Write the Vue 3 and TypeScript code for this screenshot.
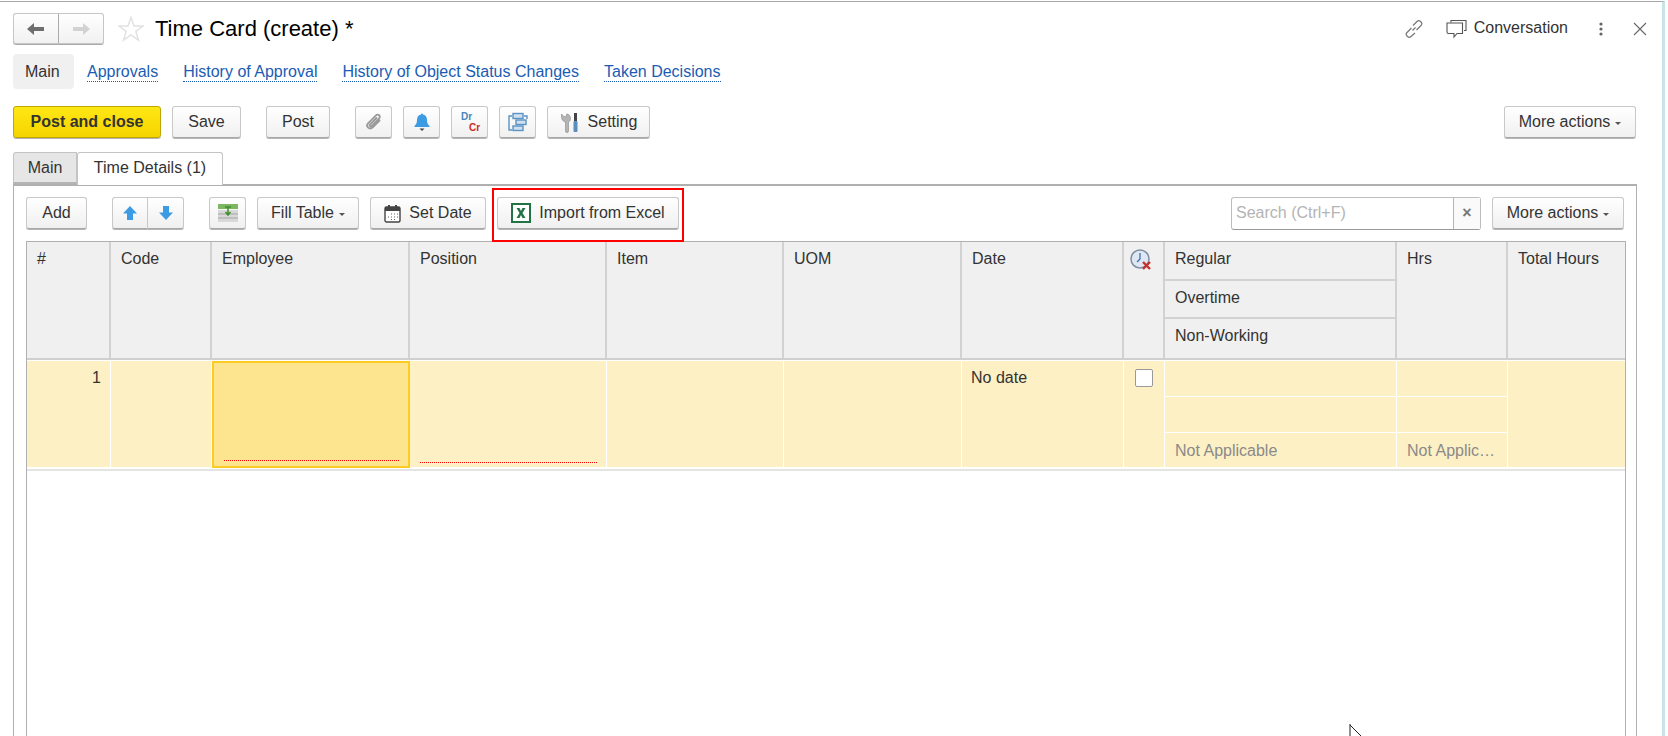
<template>
  <div class="page">
    <div class="window">
      <header class="title-row">
        <div class="nav-group">
          <button class="nav-btn">
            <svg width="18" height="14" viewBox="0 0 18 14"><path d="M0 7 7 1v4h10v4H7v4z" fill="#6e6e6e" /></svg>
          </button>
          <button class="nav-btn">
            <svg width="18" height="14" viewBox="0 0 18 14"><path d="M18 7 11 1v4H1v4h10v4z" fill="#d2d2d2" /></svg>
          </button>
        </div>
        <svg class="star" width="26" height="26" viewBox="0 0 26 26">
          <path d="M13 1.5 16 10h9l-7.2 5.4 2.7 8.8L13 19l-7.500 5.200 2.700-8.800L1 10h9z" fill="#fff" stroke="#e2e2e2" stroke-width="1.500" />
        </svg>
        <h1 class="title">Time Card (create) *</h1>
        <div class="title-right">
          <svg class="link-icon" width="20" height="20" viewBox="0 0 20 20" fill="none" stroke="#777" stroke-width="1.200">
            <path d="M8.500 11.500 11.500 8.500M7.500 9 3 13.500a2.500 2.500 0 0 0 0 3.500l.500.500a2.500 2.500 0 0 0 3.500 0L11 14" />
            <path d="M9 6.500 13 2.500a2.500 2.500 0 0 1 3.500 0l.500.500a2.500 2.500 0 0 1 0 3.500L12.500 11" />
          </svg>
          <svg class="chat-icon" width="21" height="20" viewBox="0 0 21 20" fill="none" stroke="#555" stroke-width="1.100">
            <path d="M5 3.500V1.500h15v10h-2" />
            <path d="M1 4h15.500v10.500H11L8 18v-3.500H2.500A1.500 1.500 0 0 1 1 13z" fill="#fff" />
          </svg>
          <span class="conv">Conversation</span>
          <svg class="kebab" width="4" height="14" viewBox="0 0 4 14" fill="#666"><circle cx="2" cy="2" r="1.600" /><circle cx="2" cy="7" r="1.600" /><circle cx="2" cy="12" r="1.600" /></svg>
          <svg class="close" width="14" height="14" viewBox="0 0 14 14" stroke="#666" stroke-width="1.100"><path d="M1 1l12 12M13 1 1 13" /></svg>
        </div>
      </header>

      <nav class="links">
        <span class="link-active">Main</span>
        <a v-for="link in topLinks" :key="link" class="link">{{ link }}</a>
      </nav>

      <div class="toolbar">
        <button class="btn primary w-post-close">Post and close</button>
        <button class="btn w-save">Save</button>
        <button class="btn w-post">Post</button>
        <button class="btn icon-btn first-icon">
          <svg width="20" height="20" viewBox="0 0 20 20" fill="none" stroke="#9a9a9a" stroke-width="1.800" stroke-linecap="round">
            <path d="M15.500 8.500 8.500 15.500a3 3 0 0 1-4.500-4.200l8-8a2.200 2.200 0 0 1 3.200 3.100l-7.700 7.700a1 1 0 0 1-1.600-1.500l6.600-6.600" />
          </svg>
        </button>
        <button class="btn icon-btn">
          <svg width="20" height="20" viewBox="0 0 20 20">
            <path d="M10 1.500a1 1 0 0 1 1 1c3 .6 4 3 4 5.500 0 3 .800 4.500 2.500 6v1h-15v-1C4.200 12.500 5 11 5 8c0-2.500 1-4.900 4-5.500a1 1 0 0 1 1-1z" fill="#3d9be3" />
            <path d="M7.500 16.500h5L10 19z" fill="#444" />
          </svg>
        </button>
        <button class="btn icon-btn drcr">
          <span class="dr">Dr</span>
          <span class="cr">Cr</span>
        </button>
        <button class="btn icon-btn">
          <svg width="20" height="20" viewBox="0 0 20 20" fill="none" stroke="#5b93c4" stroke-width="1.400">
            <rect x="5" y="1.500" width="10" height="5" fill="#cfe0ef" />
            <rect x="8" y="8" width="10" height="4.500" fill="#cfe0ef" />
            <rect x="5" y="14" width="10" height="4.500" fill="#cfe0ef" />
            <path d="M4 4H1v14h3M16 4h3v3" />
          </svg>
        </button>
        <button class="btn w-setting">
          <svg width="20" height="21" viewBox="0 0 20 21">
            <path d="M1.500 2 4 4.500h2.500V2c2.500 0 4 2 4 4.500 0 2-1 3-2 3.500v9a1.500 1.500 0 0 1-3 0v-9c-2-.5-4-2-4-5z" fill="#b4b4b4" stroke="#8a8a8a" stroke-width=".6" />
            <rect x="14" y="1" width="3" height="8" fill="#444" />
            <rect x="13.500" y="9" width="4" height="11" rx="1" fill="#5b8dbd" />
          </svg>
          Setting
        </button>
        <button class="btn more push-right w-more">More actions <i class="caret"></i></button>
      </div>

      <div class="tabs">
        <span class="tab">Main</span>
        <span class="tab active">Time Details (1)</span>
      </div>

      <section class="panel">
        <div class="panel-tools">
          <button class="btn w-add">Add</button>
          <div class="arrows">
            <button class="btn arrow-btn">
              <svg width="16" height="16" viewBox="0 0 16 16"><path d="M8 1 15 8.500h-4V15H5V8.500H1z" fill="#3d9be3" /></svg>
            </button>
            <button class="btn arrow-btn">
              <svg width="16" height="16" viewBox="0 0 16 16"><path d="M8 15 15 7.500h-4V1H5v6.500H1z" fill="#3d9be3" /></svg>
            </button>
          </div>
          <button class="btn icon-btn fill-icon">
            <svg width="20" height="18" viewBox="0 0 20 18">
              <rect x="0" y="0" width="20" height="5" fill="#7cb661" />
              <rect x="0" y="6" width="20" height="12" fill="#d8d8d8" />
              <path d="M0 10h20M0 14h20" stroke="#a5a5a5" stroke-width="1" />
              <path d="M7 3h6M10 3v7M7.500 8l2.500 3 2.500-3" stroke="#3f8f2f" stroke-width="1.500" fill="none" />
            </svg>
          </button>
          <button class="btn w-fill">Fill Table <i class="caret"></i></button>
          <button class="btn w-date">
            <svg width="17" height="19" viewBox="0 0 17 19">
              <rect x="1" y="3" width="15" height="15" rx="1.500" fill="#fff" stroke="#444" stroke-width="1.400" />
              <rect x="1" y="3" width="15" height="4" fill="#444" />
              <path d="M5 1v3M12 1v3" stroke="#444" stroke-width="2" />
              <path d="M7 10h1M10 10h1M13 10h1M4 13h1M7 13h1M10 13h1M13 13h1M7 15.500h1M10 15.500h1" stroke="#666" stroke-width="1" />
            </svg>
            Set Date
          </button>
          <div class="highlight">
            <button class="btn w-import">
              <svg width="20" height="20" viewBox="0 0 20 20">
                <rect x="1" y="1" width="18" height="18" fill="#fff" stroke="#217346" stroke-width="2" />
                <path d="M5.500 5h3l1.500 3 1.500-3h3l-3 5 3 5h-3L10 12l-1.500 3h-3l3-5z" fill="#217346" />
              </svg>
              Import from Excel
            </button>
          </div>
          <div class="search push-right">
            <span class="search-text">Search (Ctrl+F)</span>
            <span class="search-clear">×</span>
          </div>
          <button class="btn more w-more">More actions <i class="caret"></i></button>
        </div>

        <div class="grid">
          <div class="row head">
            <div class="cell">#</div>
            <div class="cell">Code</div>
            <div class="cell">Employee</div>
            <div class="cell">Position</div>
            <div class="cell">Item</div>
            <div class="cell">UOM</div>
            <div class="cell">Date</div>
            <div class="cell clock">
              <svg width="22" height="22" viewBox="0 0 22 22">
                <circle cx="10" cy="10" r="9" fill="#dfe8f2" stroke="#7f8ea3" stroke-width="1.500" />
                <path d="M10 4v6l-3 3" stroke="#3467a8" stroke-width="1.200" fill="none" />
                <path d="M13 13l7 7M20 13l-7 7" stroke="#c9302c" stroke-width="2.400" />
              </svg>
            </div>
            <div class="stack">
              <div class="sub">Regular</div>
              <div class="sub">Overtime</div>
              <div class="sub">Non-Working</div>
            </div>
            <div class="cell">Hrs</div>
            <div class="cell">Total Hours</div>
          </div>

          <div class="row body">
            <div class="cell num">1</div>
            <div class="cell"></div>
            <div class="cell focus"><i class="required"></i></div>
            <div class="cell"><i class="required"></i></div>
            <div class="cell"></div>
            <div class="cell"></div>
            <div class="cell">No date</div>
            <div class="cell check-cell"><span class="check"></span></div>
            <div class="stack">
              <div class="sub"></div>
              <div class="sub"></div>
              <div class="sub muted">Not Applicable</div>
            </div>
            <div class="stack">
              <div class="sub"></div>
              <div class="sub"></div>
              <div class="sub muted clip">Not Applicable</div>
            </div>
            <div class="cell"></div>
          </div>
        </div>
      </section>
    </div>

    <svg class="cursor" width="14" height="14" viewBox="0 0 14 14">
      <path d="M1 0v14M1 1l12 12" stroke="#222" stroke-width="1" fill="none" />
    </svg>
  </div>
</template>

<script setup lang="ts">
const topLinks: string[] = [
  'Approvals',
  'History of Approval',
  'History of Object Status Changes',
  'Taken Decisions',
]
</script>

<style>
html,
body {
  margin: 0;
  background: #fff;
}
</style>

<style scoped>
.page {
  position: relative;
  width: 1668px;
  height: 736px;
  overflow: hidden;
  background: #fff;
  font-family: "Liberation Sans", Arial, sans-serif;
  font-size: 16px;
  color: #333;
  display: flex;
}

.window {
  width: 1665px;
  height: 736px;
  box-sizing: border-box;
  border-top: 1px solid #a8a8a8;
  margin-top: 1px;
  padding: 0 26px 0 13px;
  border-right: 3px solid #c9e4e8;
}

button {
  font-family: inherit;
}

.title-row {
  display: flex;
  align-items: center;
  height: 31px;
  margin-top: 11px;
}

.nav-group {
  display: flex;
  width: 91px;
  height: 31px;
}

.nav-btn {
  flex: 1;
  padding: 0;
  display: flex;
  align-items: center;
  justify-content: center;
  background: linear-gradient(#fff, #f1f1f1);
  border: 1px solid #c6c6c6;
  box-shadow: 0 1px 0 #aaa;
}

.nav-btn:first-child {
  flex: 0 0 46px;
  border-radius: 3px 0 0 3px;
  border-right-color: #aaa;
}

.nav-btn:last-child {
  border-left: 0;
  border-radius: 0 3px 3px 0;
}

.star {
  margin-left: 14px;
}

.title {
  margin: 0 0 0 11px;
  font-size: 22px;
  font-weight: 400;
  color: #000;
}

.title-right {
  margin-left: auto;
  display: flex;
  align-items: center;
  margin-right: -12px;
}

.chat-icon {
  margin-left: 22px;
}

.conv {
  margin-left: 7px;
  margin-bottom: 1px;
}

.kebab {
  margin-left: 31px;
}

.close {
  margin-left: 30px;
  margin-right: 1px;
}

.links {
  display: flex;
  align-items: center;
  gap: 25px;
  margin-top: 10px;
  height: 35px;
}

.link-active {
  background: #f0f0f0;
  border-radius: 4px;
  height: 35px;
  line-height: 35px;
  padding: 0 12px;
  width: 61px;
  box-sizing: border-box;
  margin-right: -12px;
}

.link {
  color: #1a5cb4;
  line-height: 18px;
  border-bottom: 1px dotted #1a5cb4;
  margin-top: 1px;
}

.toolbar {
  display: flex;
  margin-top: 17px;
  height: 32px;
}

.btn {
  height: 32px;
  box-sizing: border-box;
  padding: 0;
  display: inline-flex;
  align-items: center;
  justify-content: center;
  gap: 8px;
  flex: none;
  font-size: 16px;
  color: #333;
  background: linear-gradient(#fff, #f0f0f0);
  border: 1px solid #c8c8c8;
  border-bottom-color: #a8a8a8;
  border-radius: 3px;
  box-shadow: 0 1px 0 #b5b5b5;
}

.primary {
  font-weight: 700;
  background: linear-gradient(#ffe714, #f5d400);
  border-color: #bfa600;
}

.w-post-close { width: 148px; }
.w-save { width: 69px; margin-left: 11px; }
.w-post { width: 64px; margin-left: 25px; }
.icon-btn { width: 37px; margin-left: 11px; }
.first-icon { margin-left: 25px; }
.w-setting { width: 103px; margin-left: 11px; }
.w-more { width: 132px; }
.push-right { margin-left: auto; }

.drcr {
  flex-direction: column;
  gap: 0;
  align-items: flex-start;
  font-size: 10px;
  font-weight: 700;
  line-height: 11px;
  padding: 0 0 0 9px;
}

.dr { color: #4a86b8; }
.cr { color: #cc2a22; margin-left: 8px; }

.caret {
  width: 0;
  height: 0;
  border-left: 3px solid transparent;
  border-right: 3px solid transparent;
  border-top: 3px solid #555;
  margin: 3px 0 0 -3px;
}

.tabs {
  display: flex;
  margin-top: 14px;
  height: 33px;
  position: relative;
  z-index: 1;
  margin-bottom: -1px;
}

.tab {
  box-sizing: border-box;
  width: 64px;
  height: 32px;
  line-height: 30px;
  text-align: center;
  background: #e6e6e6;
  border: 1px solid #c4c4c4;
  border-bottom: 2px solid #b4b4b4;
  border-radius: 3px 0 0 0;
}

.tab.active {
  width: 146px;
  height: 33px;
  background: #fff;
  border-bottom: 0;
  border-radius: 3px 3px 0 0;
}

.panel {
  border: 1px solid #b0b0b0;
  border-top-width: 2px;
  border-bottom: 0;
  margin-right: -1px;
  height: 560px;
  padding: 11px 12px 0;
}

.panel-tools {
  display: flex;
  height: 33px;
  position: relative;
}

.w-add { width: 61px; }

.arrows {
  display: flex;
  margin-left: 25px;
}

.arrow-btn {
  width: 36px;
}

.arrow-btn:first-child {
  border-radius: 3px 0 0 3px;
}

.arrow-btn:last-child {
  border-left: 0;
  border-radius: 0 3px 3px 0;
}

.fill-icon { margin-left: 25px; }
.w-fill { width: 102px; margin-left: 11px; }
.w-date { width: 116px; margin-left: 11px; }

.highlight {
  margin: -9px 0 -12px 6px;
  width: 192px;
  height: 54px;
  box-sizing: border-box;
  border: 2px solid #f00;
  padding: 7px 0 0 3px;
}

.w-import { width: 182px; }

.search {
  width: 250px;
  height: 33px;
  box-sizing: border-box;
  display: flex;
  border: 1px solid #bdbdbd;
  border-bottom-color: #999;
  border-radius: 3px;
  margin-right: 11px;
}

.search-text {
  flex: 1;
  color: #b4b4b4;
  line-height: 30px;
  padding-left: 4px;
}

.search-clear {
  width: 26px;
  border-left: 1px solid #b5b5b5;
  text-align: center;
  line-height: 30px;
  color: #777;
  font-weight: 700;
  background: #fafafa;
}

.grid {
  margin-top: 11px;
  border: 1px solid #b0b0b0;
  height: 520px;
  box-sizing: border-box;
  width: 1600px;
}

.row {
  display: grid;
  grid-template-columns: 84px 101px 198px 197px 177px 178px 162px 41px 232px 111px 1fr;
}

.head {
  height: 116px;
  background: #f0f0f0;
  border-bottom: 2px solid #cfcfcf;
}

.head .cell {
  border-right: 2px solid #d2d2d2;
  padding: 8px 10px;
}

.head .cell:last-child {
  border-right: 0;
}

.cell {
  box-sizing: border-box;
  padding: 8px 9px;
  line-height: 18px;
  min-width: 0;
}

.clock {
  padding: 7px 0 0 6px !important;
}

.stack {
  display: grid;
  grid-template-rows: 37px 38px 1fr;
  min-width: 0;
}

.head .stack {
  border-right: 2px solid #d2d2d2;
}

.sub {
  box-sizing: border-box;
  padding: 8px 10px;
  line-height: 18px;
}

.head .sub + .sub {
  border-top: 2px solid #d2d2d2;
}

.body {
  height: 106px;
  margin-top: 1px;
  background: #fdf0c4;
  border-bottom: 0;
  box-shadow: 0 2px 0 #fff, 0 4px 0 #e4e4e4;
}

.body .cell,
.body .stack {
  border-right: 1px solid #fff;
  position: relative;
}

.body .cell:last-child {
  border-right: 0;
}

.body .sub + .sub {
  border-top: 1px solid #fff;
}

.body .stack {
  grid-template-rows: 35px 36px 1fr;
}

.num {
  text-align: right;
}

.focus {
  background: #fde48e;
  border: 2px solid #fccb24 !important;
}

.required {
  position: absolute;
  left: 10px;
  right: 9px;
  bottom: 5px;
  border-bottom: 1px dotted #f00;
}

.check-cell {
  padding: 8px 0 0 11px;
}

.check {
  display: block;
  width: 18px;
  height: 18px;
  box-sizing: border-box;
  background: #fff;
  border: 1px solid #999;
  border-radius: 2px;
}

.muted {
  color: #8a8a8a;
  padding-top: 9px;
}

.clip {
  white-space: nowrap;
  overflow: hidden;
  text-overflow: ellipsis;
}

.cursor {
  position: absolute;
  left: 1349px;
  top: 724px;
}
</style>
